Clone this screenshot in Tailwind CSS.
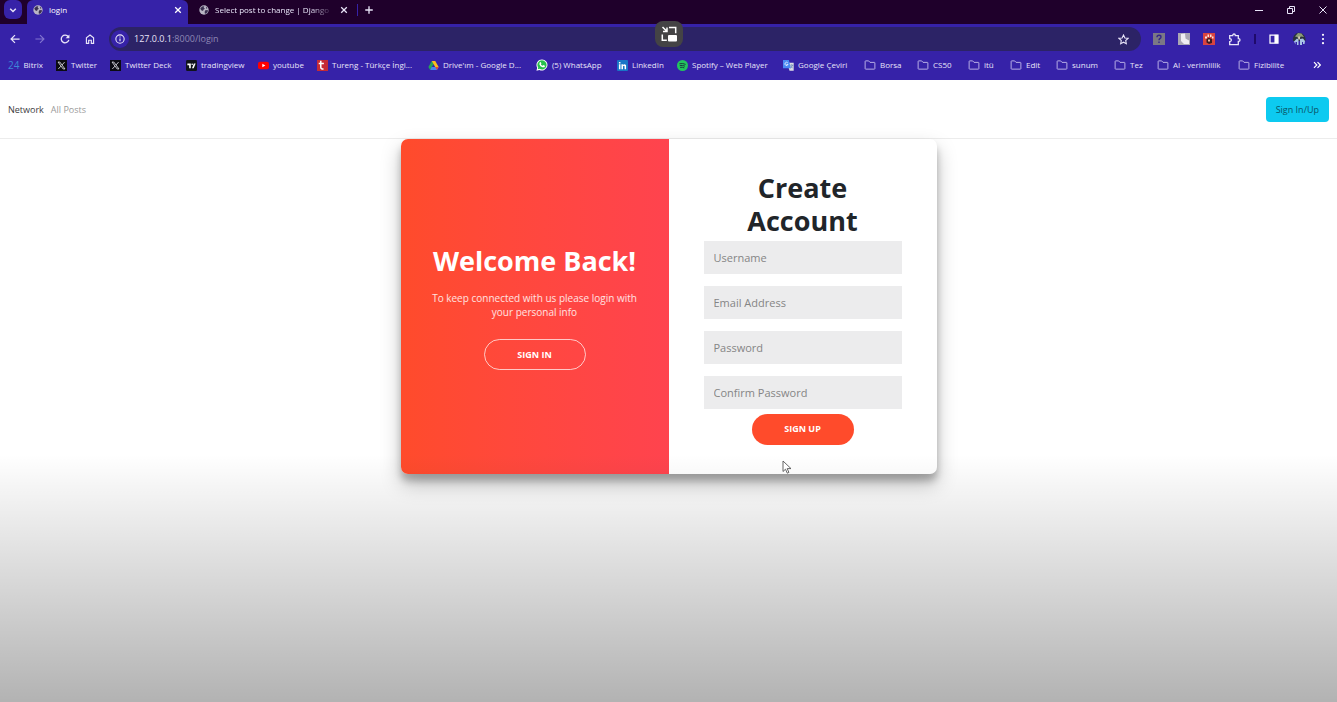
<!DOCTYPE html>
<html lang="en">
<head>
<meta charset="utf-8">
<meta name="viewport" content="width=device-width, initial-scale=1">
<title>login</title>
<script src="https://cdn.jsdelivr.net/npm/@tailwindcss/browser@4"></script>
</head>
<body class="relative min-h-screen overflow-x-hidden bg-white font-['Open_Sans','Noto_Sans',sans-serif] text-[#212529]">

<svg class="hidden" aria-hidden="true">
  <symbol id="globe" viewBox="0 0 16 16"><circle cx="8" cy="8" r="7.500" fill="#b9b5c4"/><path d="M2 5.500 5 2.500 8.500 2 7.500 4.500 9.500 6 7 7.500 6.500 9.500 3.500 8.500ZM10 8.500l3.500-.5 1 1.500-2.500 4-2.500.5-.5-3ZM11 2.500l2.500 2.500-2 1Z" fill="#3a3050"/></symbol>
  <symbol id="close" viewBox="0 0 10 10"><path d="m1.500 1.500 7 7m0-7-7 7" fill="none" stroke="currentColor" stroke-width="1.600"/></symbol>
  <symbol id="folder" viewBox="0 0 16 16"><path d="M1.500 3.200q0-.7.7-.7h4l1.800 2h5.800q.7 0 .7.700v7.600q0 .7-.7.7H2.200q-.7 0-.7-.7Z" fill="none" stroke="#b9b0e6" stroke-width="1.300"/></symbol>
  <symbol id="xlogo" viewBox="0 0 16 16"><path fill="#0b0b12" d="M0 0h16v16H0z"/><path d="M3 3h2.600l7.400 10h-2.600ZM12.500 3 8.800 7.200M7.200 8.900 3.400 13" fill="none" stroke="#e6e6ee" stroke-width="1.200"/></symbol>
</svg>

<header class="bg-[#3622a8] text-[#e8e4f8]">
  <div class="flex h-6 items-stretch bg-[#1f002b] text-[8px]">
    <div class="flex w-[27px] items-start pl-1">
      <button aria-label="Search tabs" class="flex h-[19px] w-[18px] items-center justify-center rounded-md bg-[#3622a8]"><svg class="size-2" viewBox="0 0 10 10"><path d="m1.500 3.500 3.500 3.500 3.500-3.500" fill="none" stroke="currentColor" stroke-width="1.800"/></svg></button>
    </div>
    <div class="flex w-[161px] items-center gap-1.5 rounded-t-md bg-[#3622a8] px-1.5 pb-1 text-white">
      <svg class="size-2.5"><use href="#globe"/></svg>
      <span class="flex-1">login</span>
      <button aria-label="Close login tab"><svg class="size-2"><use href="#close"/></svg></button>
    </div>
    <div class="flex w-[169px] items-center gap-1.5 pr-[9px] pl-[11px] pb-1">
      <svg class="size-2.5 shrink-0"><use href="#globe"/></svg>
      <span class="flex-1 mask-r-from-80% whitespace-nowrap">Select post to change | Django</span>
      <button aria-label="Close Django tab"><svg class="size-2"><use href="#close"/></svg></button>
    </div>
    <div class="mt-1 h-3 w-px bg-[#3622a8]"></div>
    <button aria-label="New tab" class="ml-1.5 pb-1"><svg class="size-2.5" viewBox="0 0 12 12"><path d="M6 1.500v9M1.500 6h9" stroke="currentColor" stroke-width="1.600"/></svg></button>
    <div class="ml-auto flex items-center gap-6 pr-2.5 pb-1">
      <button aria-label="Minimize"><svg class="size-2" viewBox="0 0 8 8"><path d="M0 4.500h8" stroke="currentColor"/></svg></button>
      <button aria-label="Restore"><svg class="size-2" viewBox="0 0 8 8"><path d="M.5 2.500h5v5h-5ZM2.500 2V.5h5v5H6" fill="none" stroke="currentColor"/></svg></button>
      <button aria-label="Close window"><svg class="size-2" viewBox="0 0 8 8"><path d="m.5.5 7 7m0-7-7 7" stroke="currentColor"/></svg></button>
    </div>
  </div>

  <div class="flex h-[30px] items-center pr-2.5 pl-2.5">
    <div class="flex items-center gap-[15px] pr-3.5">
      <button aria-label="Back"><svg class="size-2.5" viewBox="0 0 12 12"><path d="M11.500 6H1.500M6 1.300 1.300 6 6 10.700" fill="none" stroke="currentColor" stroke-width="1.500"/></svg></button>
      <button aria-label="Forward" class="text-[#8274cf]"><svg class="size-2.5" viewBox="0 0 12 12"><path d="M.5 6h10M6 1.300 10.700 6 6 10.700" fill="none" stroke="currentColor" stroke-width="1.400"/></svg></button>
      <button aria-label="Reload"><svg class="size-2.5" viewBox="0 0 12 12"><path d="M10 3.500A4.600 4.600 0 1 0 10.600 7" fill="none" stroke="currentColor" stroke-width="1.600"/><path d="M11.300.6v4.600H6.700Z" fill="currentColor"/></svg></button>
      <button aria-label="Home"><svg class="size-2.5" viewBox="0 0 12 12"><path d="M1.700 11.300V4.600L6 1.200l4.300 3.400v6.700H7.600V7.500H4.400v3.800Z" fill="none" stroke="currentColor" stroke-width="1.400"/></svg></button>
    </div>
    <div class="flex h-6 flex-1 items-center rounded-full bg-[#2c2366] pr-3 pl-0.5">
      <span class="flex size-[18px] items-center justify-center rounded-full bg-[#3622a8]"><svg class="size-2.5" viewBox="0 0 12 12"><circle cx="6" cy="6" r="5" fill="none" stroke="currentColor" stroke-width="1.300"/><path d="M6 5.300v3.500M6 3v1.300" stroke="currentColor" stroke-width="1.400"/></svg></span>
      <div class="ml-[5px] flex-1 text-[9px] text-[#8e88b5]"><span class="text-[#e8e4f8]">127.0.0.1</span>:8000/login</div>
      <button aria-label="Bookmark this tab"><svg class="size-[11px]" viewBox="0 0 12 12"><path d="m6 1.100 1.500 3.200 3.500.4-2.600 2.400.7 3.500L6 8.900l-3.100 1.700.7-3.500L1 4.700l3.500-.4Z" fill="none" stroke="currentColor" stroke-width="1.200"/></svg></button>
    </div>
    <div class="flex items-center gap-[13px] pl-3">
      <button aria-label="Help extension"><svg class="size-3" viewBox="0 0 12 12"><path fill="#7b7885" d="M0 0h12v12H0z"/><path d="M4 4.200Q4 2.300 6 2.300t2 1.700Q8 5 7 5.500T6 7.300M6 8.500V10" fill="none" stroke="#33268a" stroke-width="1.400"/></svg></button>
      <button aria-label="Notes extension"><svg class="size-3" viewBox="0 0 12 12"><path fill="#aaa7b3" d="M0 0h12v12H0z"/><path d="M3 1 7 .5l.5 5 3.500 2v3.500H6L3 8Z" fill="#efedf2"/></svg></button>
      <button aria-label="Paw extension"><svg class="size-3" viewBox="0 0 12 12"><path fill="#d94440" d="M0 0h12v12H0z"/><path d="M2 3.500h2v2H2zM4.500 1.500h1.500v2.500H4.500zM7 1.500h1.500v2.500H7zM9 3.500h1.500v2H9z" fill="#fbe4d8"/><path d="M3.500 6 6 4.800 9 6v4L6 11 3.500 9.500Z" fill="#3b1b22"/><path d="M5 6.500h2v2H5z" fill="#f0b9a0"/></svg></button>
      <button aria-label="Extensions"><svg class="size-[13px]" viewBox="0 0 13 13"><path d="M1.700 2.700h3V2.300a1.300 1.300 0 0 1 2.600 0v.4h3v3h.4a1.300 1.300 0 0 1 0 2.600h-.4v3.400H1.700V8.600q1.700 0 1.700-1.500T1.700 5.600Z" fill="none" stroke="currentColor" stroke-width="1.300"/></svg></button>
      <span class="h-2.5 w-0.5 bg-[#1f0a6b]"></span>
      <button aria-label="Side panel"><svg class="size-2.5" viewBox="0 0 12 12"><path d="M1.200 1.200h9.600v9.600H1.200Z" fill="none" stroke="#fff" stroke-width="1.500"/><path d="M6.500 1h4.300v10H6.500z" fill="#fff"/></svg></button>
      <button aria-label="Profile"><svg class="size-3.5" viewBox="0 0 14 14"><path d="M1 9Q0 2 7 .5q7 1 6.500 8.500Z" fill="#2a3140"/><path d="M3 4.500 6 1l3.500.5L12 5 9 4.500 7 6.500 5 5Z" fill="#8d9c77"/><path d="M2 9.500 5 6.500l1.500 1V13H5v-3H3.500v2.500ZM8 7l3-.5L13 9l-.5 3H11v-2h-1v3H8Z" fill="#a9c3e6"/><path d="M6.300 4.500h1.600v3H6.300z" fill="#e2d3c4"/></svg></button>
      <button aria-label="Browser menu"><svg class="h-3 w-2" viewBox="0 0 8 12"><circle cx="4" cy="1.800" r="1.100" fill="#fff"/><circle cx="4" cy="6" r="1.100" fill="#fff"/><circle cx="4" cy="10.200" r="1.100" fill="#fff"/></svg></button>
    </div>
  </div>

  <nav aria-label="Bookmarks" class="flex h-[26px] items-center pr-4 pb-1 pl-2 text-[8px] whitespace-nowrap *:shrink-0">
    <a href="#" class="flex w-12 items-center gap-1"><span class="text-[10px] text-[#3d86d8]">24</span>Bitrix</a>
    <a href="#" class="flex w-[54px] items-center gap-1"><svg class="size-[11px]"><use href="#xlogo"/></svg>Twitter</a>
    <a href="#" class="flex w-[76px] items-center gap-1"><svg class="size-[11px]"><use href="#xlogo"/></svg>Twitter Deck</a>
    <a href="#" class="flex w-[72px] items-center gap-1"><svg class="size-[11px]" viewBox="0 0 16 16"><rect width="16" height="16" rx="2" fill="#10131c"/><path d="M2 5h5v7H4.600V7.500H2ZM11.500 5H14l-2.800 7H8.700Z" fill="#fff"/><circle cx="9" cy="6.200" r="1.200" fill="#fff"/></svg>tradingview</a>
    <a href="#" class="flex w-[59px] items-center gap-1"><svg class="size-[11px]" viewBox="0 0 16 16"><rect y="2.500" width="16" height="11" rx="3" fill="#f00"/><path d="m6.300 5.500 4.400 2.500-4.400 2.500Z" fill="#fff"/></svg>youtube</a>
    <a href="#" class="flex w-[111px] items-center gap-1"><svg class="size-[11px]" viewBox="0 0 16 16"><path fill="#c52b35" d="M0 0h16v16H0z"/><path d="M5.500 1v9.500q0 3 4 2.700M2.500 5H10" fill="none" stroke="#fff" stroke-width="2.200"/></svg>Tureng - Türkçe İngi...</a>
    <a href="#" class="flex w-[108px] items-center gap-1"><svg class="size-[11px]" viewBox="0 0 16 16"><path d="M5.500 1.500h5L8 6 3.200 14.500.5 10Z" fill="#24a35a"/><path d="M5.500 1.500h5L15.500 10h-5Z" fill="#fbbc1d"/><path d="M5.300 10h10.200L13 14.500H3.200Z" fill="#4386f5"/><path d="M10.500 10h5L13 14.500Z" fill="#e94235"/></svg>Drive'ım - Google D...</a>
    <a href="#" class="flex w-[81px] items-center gap-1"><svg class="size-3" viewBox="0 0 16 16"><path d="M8 .5a7.400 7.400 0 1 1-3.500 14L.6 15.500l1-3.900A7.400 7.400 0 0 1 8 .5Z" fill="#fff"/><path d="M8 1.800a6.100 6.100 0 1 1-3.200 11.300l-2.400.7.600-2.400A6.100 6.100 0 0 1 8 1.800Z" fill="#26c04b"/><path d="M5 4.500 6.300 4l.9 2-.7.900q.8 1.600 2.500 2.200l.9-1 2 1-.3 1.400q-1.400 1-3.100.4Q5.400 9.700 4.600 7.200 4.300 5.500 5 4.500Z" fill="#fff"/></svg>(5) WhatsApp</a>
    <a href="#" class="flex w-[60px] items-center gap-1"><svg class="size-[11px]" viewBox="0 0 16 16"><rect width="16" height="16" rx="1.500" fill="#1875c7"/><path d="M2.800 6.300H5v7H2.800ZM2.800 2.800H5V5H2.800ZM6.500 6.300h2.100v1q2.500-2.300 4.600.2v5.800H11V9.200q-1.200-1.700-2.300 0v4.100H6.500Z" fill="#fff"/></svg>LinkedIn</a>
    <a href="#" class="flex w-[106px] items-center gap-1"><svg class="size-[11px]" viewBox="0 0 16 16"><circle cx="8" cy="8" r="8" fill="#22c45e"/><path d="M3.500 5.500q4.800-1.300 9 .9M4 8.200q4-1 7.700.8M4.500 10.800q3.400-.8 6.200.7" fill="none" stroke="#173a3c" stroke-width="1.400"/></svg>Spotify – Web Player</a>
    <a href="#" class="flex w-[81px] items-center gap-1"><svg class="size-[11px]" viewBox="0 0 16 16"><path d="M6 4h9.500v11.500H9.500Z" fill="#dcdde5"/><path d="M0 0h8.500l3 12H0Z" fill="#4a8af4"/><path d="M7 4.300A2.300 2.300 0 1 0 7.300 6.500H5" fill="none" stroke="#fff" stroke-width="1.100"/><path d="M10.500 7.500H15M12.500 6.500v1M14 7.500q-.5 2.500-3 4M11.500 9l2.500 3" fill="none" stroke="#5d7fae"/></svg>Google Çeviri</a>
    <a href="#" class="flex w-[53px] items-center gap-1"><svg class="size-3"><use href="#folder"/></svg>Borsa</a>
    <a href="#" class="flex w-[51px] items-center gap-1"><svg class="size-3"><use href="#folder"/></svg>CS50</a>
    <a href="#" class="flex w-[42px] items-center gap-1"><svg class="size-3"><use href="#folder"/></svg>itü</a>
    <a href="#" class="flex w-[46px] items-center gap-1"><svg class="size-3"><use href="#folder"/></svg>Edit</a>
    <a href="#" class="flex w-[58px] items-center gap-1"><svg class="size-3"><use href="#folder"/></svg>sunum</a>
    <a href="#" class="flex w-[43px] items-center gap-1"><svg class="size-3"><use href="#folder"/></svg>Tez</a>
    <a href="#" class="flex w-[81px] items-center gap-1"><svg class="size-3"><use href="#folder"/></svg>AI - verimlilik</a>
    <a href="#" class="flex items-center gap-1"><svg class="size-3"><use href="#folder"/></svg>Fizibilite</a>
    <button aria-label="More bookmarks" class="ml-auto"><svg class="size-2" viewBox="0 0 8 8"><path d="m1 1.200 2.800 2.800L1 6.800M4.500 1.200 7.300 4 4.500 6.800" fill="none" stroke="#fff" stroke-width="1.200"/></svg></button>
  </nav>
</header>

<nav aria-label="Site" class="flex h-[59px] items-center border-b border-[#ececec] px-2 text-[9px]">
  <a href="#" class="pt-0.5 text-[#3c3c3e]">Network</a>
  <a href="#" class="ml-[7px] pt-0.5 text-[#9a9a9a]">All Posts</a>
  <a href="#" class="ml-auto flex h-[25px] items-center rounded bg-[#0dcaf0] px-2.5 pt-0.5 text-[#0b5566]">Sign In/Up</a>
</nav>

<main class="mx-auto grid min-h-[335px] max-w-[536px] grid-cols-2 overflow-hidden rounded-[7px] bg-white text-center shadow-[0_10px_20px_rgba(0,0,0,0.25),0_7px_7px_rgba(0,0,0,0.22)]">
  <section class="flex flex-col items-center justify-center bg-linear-to-r from-[#ff4b2b] to-[#ff434e] px-7 text-white">
    <h1 class="text-[27px] leading-9 font-bold whitespace-nowrap">Welcome Back!</h1>
    <p class="mt-3 mb-5 text-[10px] leading-[14px] text-white/85">To keep connected with us please login with<br>your personal info</p>
    <button class="h-[31px] w-[102px] rounded-full border border-white/70 text-[9px] font-bold">SIGN IN</button>
  </section>
  <form class="flex flex-col items-center justify-center px-[35px] pt-0.5">
    <h1 class="mb-1 text-[27px] leading-[33px] font-bold">Create Account</h1>
    <div class="flex w-full flex-col gap-3">
      <input type="text" aria-label="Username" placeholder="Username" class="h-[33px] w-full bg-[#ececed] px-2.5 text-[11px] placeholder:text-[#858585]">
      <input type="email" aria-label="Email Address" placeholder="Email Address" class="h-[33px] w-full bg-[#ececed] px-2.5 text-[11px] placeholder:text-[#858585]">
      <input type="password" aria-label="Password" placeholder="Password" class="h-[33px] w-full bg-[#ececed] px-2.5 text-[11px] placeholder:text-[#858585]">
      <input type="password" aria-label="Confirm Password" placeholder="Confirm Password" class="h-[33px] w-full bg-[#ececed] px-2.5 text-[11px] placeholder:text-[#858585]">
    </div>
    <button type="button" class="mt-[5px] h-[31px] w-[102px] rounded-full bg-[#ff4b2b] text-[9px] font-bold text-white">SIGN UP</button>
  </form>
</main>

<div class="pointer-events-none absolute inset-x-0 bottom-0 h-[248px] bg-linear-to-b from-black/0 to-black/30"></div>
<button aria-label="Picture in picture" class="absolute top-[21px] left-1/2 flex h-[26px] w-7 -translate-x-1/2 items-center justify-center rounded-lg bg-[#444345]"><svg class="size-4" viewBox="0 0 16 16"><path d="M8 1.500h6.700v5.700M1.300 8.500v5.700h4.500M1.500 1l4.300 4.300M6 1.500v4H2" fill="none" stroke="#fff" stroke-width="1.500"/><rect x="7" y="9" width="9" height="6.500" rx="1" fill="#fff"/></svg></button>
<svg class="pointer-events-none absolute top-[460px] left-[782px] h-3.5 w-2.5" viewBox="0 0 10 14"><path d="M1 1v10.500l2.500-2.300 1.800 4 1.600-.8-1.700-3.800H9Z" fill="#fff" stroke="#555" stroke-width=".9"/></svg>
</body>
</html>
